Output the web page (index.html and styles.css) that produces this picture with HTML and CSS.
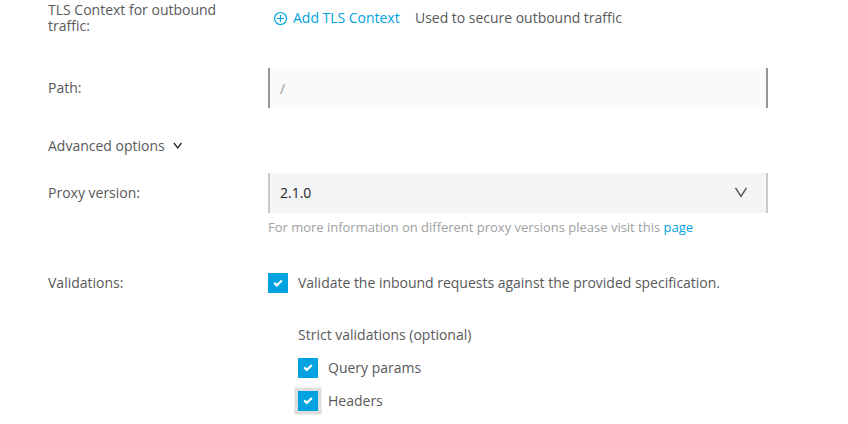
FILE: index.html
```html
<!DOCTYPE html>
<html lang="en">
<head>
<meta charset="utf-8">
<title>Proxy configuration</title>
<link rel="stylesheet" href="styles.css">
</head>
<body>
<form class="form">
  <div class="row row-tls">
    <div class="label label-tls">TLS Context for outbound traffic:</div>
    <div class="tls">
      <svg class="plus" width="14" height="14" viewBox="0 0 14 14"><circle cx="6.500" cy="7.500" r="6"/><path d="M6.500 4v7M3 7.500h7"/></svg>
      <a class="link">Add TLS Context</a>
      <span class="hint">Used to secure outbound traffic</span>
    </div>
  </div>
  <div class="row row-path">
    <div class="label">Path:</div>
    <div class="input">/</div>
  </div>
  <div class="advanced">Advanced options
    <svg class="chev" width="10" height="8" viewBox="0 0 10 8"><path d="M1 1l3.700 5L8.400 1"/></svg>
  </div>
  <div class="row row-proxy">
    <div class="label">Proxy version:</div>
    <div class="select"><span>2.1.0</span>
      <svg class="arrow" width="14" height="12" viewBox="0 0 14 12"><path d="M1.500 .8L7 9.300l5.500-8.500"/></svg>
    </div>
  </div>
  <div class="note">For more information on different proxy versions please visit this <a class="link">page</a></div>
  <div class="row row-valid">
    <div class="label">Validations:</div>
    <div class="check"><span class="box"><svg width="10" height="8" viewBox="0 0 10 8"><path d="M1.200 3.900l2.600 2.500L8.900 1.500"/></svg></span><span class="main-text">Validate the inbound requests against the provided specification.</span></div>
  </div>
  <div class="strict">
    <div class="title">Strict validations (optional)</div>
    <div class="check"><span class="box"><svg width="10" height="8" viewBox="0 0 10 8"><path d="M1.200 3.400l2.600 2.500L8.900 1"/></svg></span><span>Query params</span></div>
    <div class="check"><span class="box focus"><svg width="10" height="8" viewBox="0 0 10 8"><path d="M1.200 3.400l2.600 2.500L8.900 1"/></svg></span><span>Headers</span></div>
  </div>
</form>
</body>
</html>
```

FILE: styles.css
```css
* { box-sizing: border-box; }
body { margin: 0; background: #fff; color: #58595a; font: 14px/20px "Open Sans", sans-serif; }
svg { fill: none; flex: none; }
.form { width: 768px; height: 424px; padding: 2px 0 0 48px; }
.row { display: grid; grid-template-columns: 220px 500px; align-items: center; }
.row-tls { height: 32px; }
.label-tls { width: 180px; line-height: 16px; }
.tls { display: flex; align-items: center; padding-left: 6px; white-space: nowrap; }
.plus { stroke: #00a2df; stroke-width: 1.15; margin-right: 5px; }
.link { color: #00a2df; }
.tls .link { letter-spacing: -0.02px; }
.hint { margin-left: 15.300px; letter-spacing: -0.02px; }
.row-path { margin-top: 34px; height: 40px; }
.input, .select { height: 40px; padding: 0 10px; display: flex; align-items: center; }
.input { padding-top: 2px; background: #f9fafc; border: solid #979797; border-width: 0 2px; color: #979797; }
.advanced { display: flex; align-items: center; height: 20px; margin-top: 28px; }
.chev { stroke: #262728; stroke-width: 1.3; margin-left: 8px; }
.row-proxy { margin-top: 17px; }
.select { background: #f4f5f7; border: solid #cacaca; border-width: 0 2px; color: #262728; justify-content: space-between; }
.arrow { stroke: #58595a; stroke-width: 1.5; margin-right: 8px; }
.note { margin: 4px 0 0 220px; font-size: 13px; color: #a0a0a0; letter-spacing: -0.012px; }
.row-valid { margin-top: 36px; }
.check { display: flex; align-items: center; gap: 10px; height: 20px; white-space: nowrap; }
.main-text { letter-spacing: -0.015px; }
.box { width: 20px; height: 20px; background: #00a2df; display: flex; align-items: center; justify-content: center; }
.box svg { stroke: #fff; stroke-width: 2.2; }
.focus { box-shadow: 0 0 0 3px #dedede, 0 0 0 4px #eee; }
.strict { margin: 32px 0 0 250px; }
.strict .check { margin-top: 13px; }
```
